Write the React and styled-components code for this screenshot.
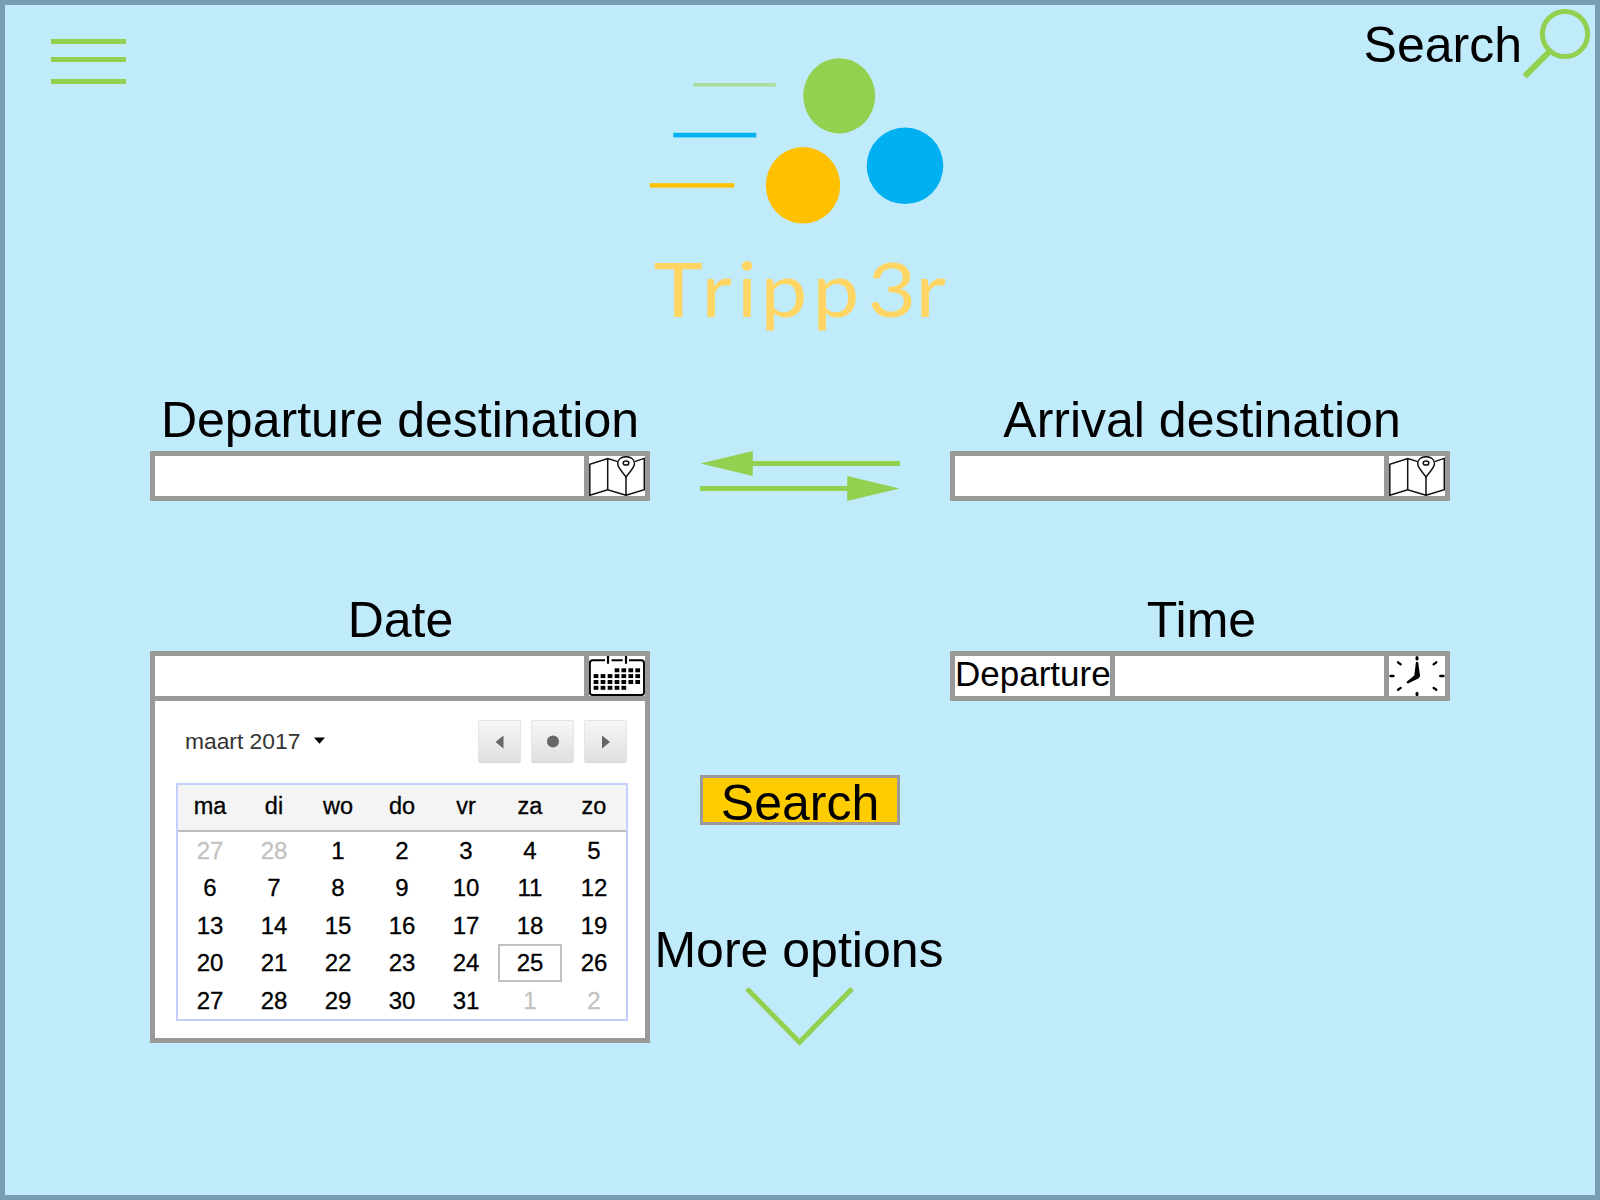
import React from "react";
import styled, { createGlobalStyle } from "styled-components";

const GREEN = "#92d050";
const GREY = "#999999";

const GlobalStyle = createGlobalStyle`
  *, *::before, *::after { box-sizing: border-box; }
  body { margin: 0; font-family: "Liberation Sans", Arial, sans-serif; color: #000; }
  button { font: inherit; color: inherit; padding: 0; margin: 0; cursor: pointer; }
  svg { display: block; flex: none; }
`;

const Screen = styled.main`
  width: 1600px;
  height: 1200px;
  border: 5px solid #759fb0;
  background: #c0ebfb;
  overflow: hidden;
`;

const Header = styled.header`
  display: grid;
  grid-template-columns: 645px 300px 645px;
  align-items: start;
  height: 390px;
`;

const MenuButton = styled.button`
  display: flex;
  flex-direction: column;
  width: 75px;
  margin: 34px 0 0 46px;
  border: 0;
  background: none;
`;

const MenuBar = styled.span`
  height: 5px;
  margin-bottom: ${(p) => p.$after}px;
  background: ${GREEN};
`;

const SearchLink = styled.div`
  display: flex;
  justify-self: end;
  padding: 1px 1px 0 0;
  font-size: 50px;
  line-height: 50px;

  span { margin: 14px 0 0; }
`;

const Logo = styled.svg`
  margin-top: 45px;
`;

const Form = styled.form`
  display: grid;
  grid-template-columns: 500px 300px 500px;
  margin-left: 145px;
`;

const Column = styled.div`
  display: flex;
  flex-direction: column;
`;

const Middle = styled(Column)`
  align-items: center;
  padding-top: 56px;
`;

const Label = styled.div`
  height: ${(p) => p.$height || 56}px;
  padding-left: ${(p) => p.$indent || 0}px;
  padding-right: ${(p) => p.$outdent || 0}px;
  font-size: 50px;
  line-height: 50px;
  text-align: center;
  white-space: nowrap;
`;

const Field = styled.div`
  margin-bottom: ${(p) => p.$after || 0}px;
`;

const InputRow = styled.div`
  display: flex;
  height: 50px;
  border: 5px solid ${GREY};
  background: #fff;
`;

const Blank = styled.div`
  flex: 1;
`;

const Mode = styled.div`
  width: 160px;
  border-right: 5px solid ${GREY};
  font-size: 35px;
  line-height: 35px;
  white-space: nowrap;
`;

const IconCell = styled.div`
  width: 61px;
  border-left: 5px solid ${GREY};
`;

const SearchButton = styled.button`
  width: 200px;
  height: 50px;
  margin: 274px 0 100px;
  border: 3px solid ${GREY};
  background: #ffcc00;
  font-size: 50px;
  line-height: 50px;
`;

const Picker = styled.div`
  height: 342px;
  padding: 19px 18px 0 21px;
  border: 5px solid ${GREY};
  border-top: 0;
  background: #fff;
`;

const PickerBar = styled.div`
  display: flex;
  align-items: center;
  justify-content: space-between;
  height: 43px;
  margin-bottom: 20px;
  padding-left: 9px;
`;

const Month = styled.div`
  display: flex;
  align-items: center;
  gap: 14px;
  margin-top: -2px;
  font-size: 22.8px;
  line-height: 26px;
  color: #333;
`;

const PickerNav = styled.div`
  display: flex;
  gap: 10px;
`;

const NavButton = styled.button`
  display: grid;
  place-items: center;
  width: 43px;
  height: 43px;
  border: 1px solid #e4e4e4;
  border-bottom-color: #d8d8d8;
  border-radius: 2px;
  background: linear-gradient(#f7f7f7, #dfdfdf);
`;

const Days = styled.div`
  display: grid;
  grid-template-columns: repeat(7, 1fr);
  grid-template-rows: 46.5px repeat(5, 37.6px);
  width: 452px;
  border: 2px solid #c4d0fc;
  font-size: 24px;
  text-align: center;
`;

const Weekday = styled.div`
  padding-top: 1px;
  border-bottom: 2px solid #bcbcbc;
  background: #f4f4f4;
  font-size: 23.5px;
  line-height: 41px;
  -webkit-text-stroke: 0.3px #000;
`;

const Day = styled.div`
  border: 2px solid ${(p) => (p.$today ? "#c0c0c0" : "transparent")};
  color: ${(p) => (p.$muted ? "#c2c2c2" : "#000")};
  line-height: 33px;
  -webkit-text-stroke: 0.3px currentColor;
`;

const MapIcon = () => (
  <svg width="56" height="40" viewBox="0 0 56 40" fill="none" stroke="#111" strokeWidth="1.5">
    <path d="M28.7 5.6L18.7 2.5L.8 8.3V39.3L18.7 33.7L37 39.3L55.3 33.7V2.4L45.6 5.6M18.7 2.5V33.7M37 21.5V39.3" />
    <path d="M37 21.4C34.5 16.6 28.7 12.5 28.7 7.3C28.7 3.3 32.4 .7 37 .7S45.5 3.3 45.5 7.3C45.5 12.5 39.5 16.6 37 21.4Z" />
    <ellipse cx="37" cy="7" rx="2.8" ry="2.1" />
  </svg>
);

const DOT_COLUMNS = [7, 14, 21, 28, 34.8, 41.8, 48.7];
const DOT_ROWS = [
  { y: 14.3, from: 3, to: 7 },
  { y: 20.1, from: 0, to: 7 },
  { y: 26, from: 0, to: 7 },
  { y: 31.8, from: 0, to: 5 },
];

const CalendarIcon = () => (
  <svg width="56" height="40" viewBox="0 0 56 40">
    <g fill="none" stroke="#000" strokeWidth="1.9">
      <path d="M16 4.3H3.6Q.9 4.3 .9 7V36.4Q.9 39 3.6 39H52.3Q55 39 55 36.4V7Q55 4.3 52.3 4.3H40M22.5 4.3H33.7" />
      <path d="M19 0V7.7M37 0V7.7" strokeWidth="2.2" />
    </g>
    {DOT_ROWS.map((row) =>
      DOT_COLUMNS.slice(row.from, row.to).map((x) => (
        <rect key={`${x}-${row.y}`} x={x - 2.35} y={row.y - 2} width="4.7" height="4" />
      ))
    )}
  </svg>
);

const ClockIcon = () => (
  <svg width="56" height="40" viewBox="0 0 56 40">
    <g stroke="#000" strokeWidth="2.3" strokeLinecap="round">
      <path d="M28 1.5V3M28 37.3V38.6" strokeWidth="3" />
      <path d="M1.4 20H4.6M51.2 20H54.6M9 6.3L11.7 8.3M47.3 6.3L44.6 8.3M9 33.8L11.7 31.9M47.3 33.8L44.6 31.9" />
    </g>
    <path d="M26.9 6.4Q28 5.2 29.2 6.4L31.1 20.3L29.3 22.5L19 27.5Q17.2 27.2 17.7 25.7L25.3 19.5Z" />
  </svg>
);

const WEEKDAYS = ["ma", "di", "wo", "do", "vr", "za", "zo"];
const FIRST_DAY = 2;
const MONTH_LENGTH = 31;

const dayCells = Array.from({ length: 35 }, (_, i) => {
  const n = i - FIRST_DAY + 1;
  if (n < 1) return { n: n + 28, muted: true };
  if (n > MONTH_LENGTH) return { n: n - MONTH_LENGTH, muted: true };
  return { n, today: n === 25 };
});

const DatePicker = () => (
  <Picker>
    <PickerBar>
      <Month>
        maart 2017
        <svg width="11" height="7" viewBox="0 0 11 7"><path d="M0 .5H11L5.5 6.8Z" /></svg>
      </Month>
      <PickerNav>
        <NavButton type="button">
          <svg width="12" height="14" viewBox="0 0 12 14" fill="#666"><path d="M9.5 .5V13.5L1.5 7Z" /></svg>
        </NavButton>
        <NavButton type="button">
          <svg width="12" height="14" viewBox="0 0 12 14" fill="#666"><circle cx="6" cy="6.5" r="6" /></svg>
        </NavButton>
        <NavButton type="button">
          <svg width="12" height="14" viewBox="0 0 12 14" fill="#666"><path d="M2 .5V13.5L10 7Z" /></svg>
        </NavButton>
      </PickerNav>
    </PickerBar>
    <Days>
      {WEEKDAYS.map((d) => <Weekday key={d}>{d}</Weekday>)}
      {dayCells.map((d, i) => (
        <Day key={i} $muted={d.muted} $today={d.today}>{d.n}</Day>
      ))}
    </Days>
  </Picker>
);

const TextField = ({ label, icon, mode, after, indent }) => (
  <Field $after={after}>
    <Label $indent={indent}>{label}</Label>
    <InputRow>
      {mode && <Mode>{mode}</Mode>}
      <Blank />
      <IconCell>{icon}</IconCell>
    </InputRow>
  </Field>
);

const LOGO_STRETCH = 1.1;
const LETTER_STARTS = [653.5, 701.5, 737, 760.5, 812.5, 867.5, 915.5];

export default function App() {
  return (
    <Screen>
      <GlobalStyle />
      <Header>
        <MenuButton type="button" aria-label="Menu">
          <MenuBar $after={13} />
          <MenuBar $after={17} />
          <MenuBar $after={0} />
        </MenuButton>
        <Logo width="300" height="290" viewBox="650 50 300 290">
          <rect x="693.3" y="83" width="82.5" height="3.6" fill="#a8dda0" />
          <rect x="673.3" y="132.8" width="83" height="4.6" fill="#00b0f0" />
          <rect x="650" y="183.2" width="84" height="4.4" fill="#ffc000" />
          <ellipse cx="839.2" cy="95.8" rx="36" ry="37.6" fill={GREEN} />
          <ellipse cx="905" cy="165.8" rx="38.3" ry="38.3" fill="#00b0f0" />
          <ellipse cx="803" cy="185.3" rx="37.2" ry="38.3" fill="#ffc000" />
          <text
            x={LETTER_STARTS.map((x) => (x / LOGO_STRETCH).toFixed(2)).join(" ")}
            y="317"
            transform={`scale(${LOGO_STRETCH} 1)`}
            fill="#ffd663"
            fontFamily="Lato, sans-serif"
            fontSize="76"
          >
            Tripp3r
          </text>
        </Logo>
        <SearchLink>
          <span>Search</span>
          <svg width="72" height="74" viewBox="1522 6 72 74" fill="none" stroke={GREEN} strokeWidth="5">
            <circle cx="1565" cy="34" r="22.6" />
            <path d="M1524.6 76.4L1550 51" strokeWidth="6" />
          </svg>
        </SearchLink>
      </Header>
      <Form>
        <Column>
          <TextField label="Departure destination" icon={<MapIcon />} after={94} />
          <TextField label="Date" icon={<CalendarIcon />} indent={1} />
          <DatePicker />
        </Column>
        <Middle>
          <svg width="200" height="50" viewBox="0 0 200 50" fill={GREEN}>
            <path d="M.5 12.5L52.8 0V10H200V15H52.8V25Z" />
            <path d="M199.5 37.5L147.2 25V35H0V40H147.2V50Z" />
          </svg>
          <SearchButton type="button">Search</SearchButton>
          <Label $height={60} $outdent={2}>More options</Label>
          <svg width="120" height="64" viewBox="740 985 120 64" fill="none" stroke={GREEN} strokeWidth="5">
            <path d="M747 988.7L799.5 1042.2L852 988.7" />
          </svg>
        </Middle>
        <Column>
          <TextField label="Arrival destination" icon={<MapIcon />} after={94} indent={4} />
          <TextField label="Time" mode="Departure" icon={<ClockIcon />} indent={3} />
        </Column>
      </Form>
    </Screen>
  );
}
